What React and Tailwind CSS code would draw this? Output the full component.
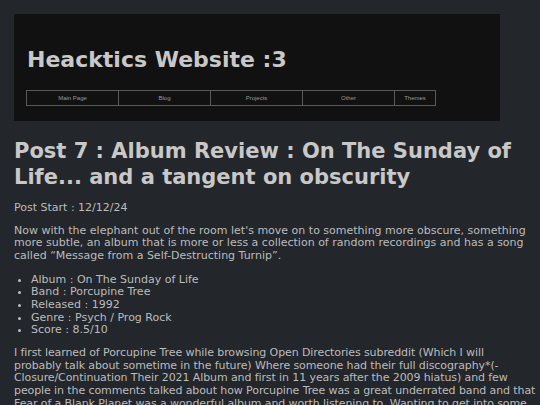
export default function App() {
  const nav = [
    ["Main Page", "w-[93px]"],
    ["Blog", "w-[93px]"],
    ["Projects", "w-[93px]"],
    ["Other", "w-[93px]"],
    ["Themes", "w-[42px]"],
  ];
  return (
    <div className="min-h-[405px] bg-[#23262b] py-[14px] pl-[14px] text-[#bcbcbc] text-[11px] leading-[12.67px]" style={{ fontFamily: '"DejaVu Sans", Verdana, sans-serif' }}>
      <header className="w-[486px] bg-[#111111] pt-[32px] pb-[15px] pl-[12px]">
        <h1 className="pl-[1px] text-[22px] leading-[28px] font-bold text-[#c8c8c8]">Heacktics Website :3</h1>
        <nav className="mt-[16px] flex">
          {nav.map(([label, w], i) => (
            <div
              key={label}
              className={`${w} h-[16px] flex items-center justify-center border border-[#5a5a5a] ${i > 0 ? "-ml-px" : ""} text-[6px] text-[#9a9a9a]`}
              style={{ fontFamily: '"Liberation Sans", Arial, sans-serif' }}
            >
              {label}
            </div>
          ))}
        </nav>
      </header>
      <main className="w-[526px]">
        <h2 className="mt-[17px] text-[21px] leading-[26px] font-bold text-[#c8c8c8]">
          Post 7 : Album Review : On The Sunday of Life... and a tangent on obscurity
        </h2>
        <p className="mt-[12px]">Post Start : 12/12/24</p>
        <p className="mt-[10px]">
          Now with the elephant out of the room let's move on to something more obscure, something more subtle, an album that is more or less a collection of random recordings and has a song called “Message from a Self-Destructing Turnip”.
        </p>
        <ul className="mt-[11px] list-disc pl-[17px]">
          <li>Album : On The Sunday of Life</li>
          <li>Band : Porcupine Tree</li>
          <li>Released : 1992</li>
          <li>Genre : Psych / Prog Rock</li>
          <li>Score : 8.5/10</li>
        </ul>
        <p className="mt-[10px] tracking-[-0.1px]">
          I first learned of Porcupine Tree while browsing Open Directories subreddit (Which I will<br />
          probably talk about sometime in the future) Where someone had their full discography*(-<br />
          Closure/Continuation Their 2021 Album and first in 11 years after the 2009 hiatus) and few<br />
          people in the comments talked about how Porcupine Tree was a great underrated band and that<br />
          Fear of a Blank Planet was a wonderful album and worth listening to. Wanting to get into some<br />
          new music I downloaded the whole thing and started listening from the beginning.
        </p>
      </main>
    </div>
  );
}
